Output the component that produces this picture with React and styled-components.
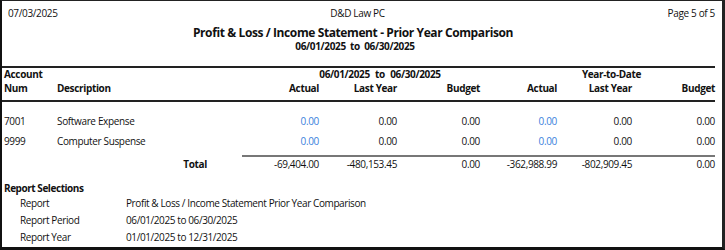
import React from "react";
import styled, { createGlobalStyle } from "styled-components";

const GlobalStyle = createGlobalStyle`
  html, body {
    margin: 0;
    padding: 0;
    background: #fff;
  }
  body {
    font-family: "Open Sans", "Noto Sans", sans-serif;
    color: #111;
  }
`;

const Page = styled.div`
  box-sizing: border-box;
  width: 725px;
  height: 250px;
  border-top: 1px solid #222;
  border-left: 2px solid #111;
  border-right: 3px solid #222;
  border-bottom: 3px solid #111;
  padding: 5px 0 0 0;
  font-size: 10px;
  letter-spacing: -0.35px;
  overflow: hidden;
`;

const TopLine = styled.div`
  display: grid;
  grid-template-columns: 1fr auto 1fr;
  padding: 0 7px 0 6px;
  line-height: 14px;
  height: 14px;
`;

const TopCell = styled.div`
  text-align: ${(p) => p.align || "left"};
  margin-right: ${(p) => (p.align === "center" ? "8px" : "0")};
`;

const Title = styled.div`
  margin-top: 6px;
  text-align: center;
  font-weight: 700;
  font-size: 12px;
  letter-spacing: -0.4px;
  line-height: 13px;
  padding-right: 18px;
`;

const SubTitle = styled.div`
  margin-top: 1px;
  text-align: center;
  font-weight: 700;
  line-height: 12px;
  word-spacing: 2px;
  padding-right: 14px;
`;

const Rule = styled.div`
  margin: ${(p) => p.margin || "0"};
  margin-right: 7px;
  height: ${(p) => p.h || 2}px;
  background: ${(p) => p.color || "#222"};
  margin-left: ${(p) => p.left || 0}px;
`;

const Grid = styled.div`
  display: grid;
  grid-template-columns: 53px 185px 77px 78px 83px 77px 75px 83px;
  padding-left: 2px;
  align-items: center;
`;

const Cell = styled.div`
  text-align: ${(p) => p.align || "left"};
  font-weight: ${(p) => (p.bold ? 700 : 400)};
  color: ${(p) => (p.blue ? "#3b7fdc" : "inherit")};
  grid-column: ${(p) => p.span || "auto"};
  line-height: ${(p) => p.lh || 20}px;
  padding-left: ${(p) => p.pl || 0}px;
  padding-right: ${(p) => p.pr || 0}px;
  white-space: nowrap;
  word-spacing: ${(p) => (p.wide ? "3px" : "normal")};
`;

const Rows = styled.div`
  padding-top: 9px;
`;

const Selections = styled.div`
  margin-top: 10px;
  padding-left: 2px;
`;

const SelTitle = styled.div`
  font-weight: 700;
  line-height: 14px;
  letter-spacing: -0.45px;
`;

const SelRow = styled.div`
  display: grid;
  grid-template-columns: 106px 1fr;
  padding-left: 16px;
  line-height: 17px;
  letter-spacing: -0.4px;
`;

const rows = [
  { num: "7001", desc: "Software Expense" },
  { num: "9999", desc: "Computer Suspense" },
];

const totals = ["-69,404.00", "-480,153.45", "0.00", "-362,988.99", "-802,909.45", "0.00"];

export default function App() {
  return (
    <>
      <GlobalStyle />
      <Page>
        <TopLine>
          <TopCell>07/03/2025</TopCell>
          <TopCell align="center">D&amp;D Law PC</TopCell>
          <TopCell align="right">Page 5 of 5</TopCell>
        </TopLine>
        <Title>Profit &amp; Loss / Income Statement - Prior Year Comparison</Title>
        <SubTitle>06/01/2025 to 06/30/2025</SubTitle>
        <Rule margin="14px 0 0 0" h={2} />

        <Grid>
          <Cell bold lh={13}>Account</Cell>
          <Cell lh={13} />
          <Cell bold lh={13} span="3 / 6" align="center" pl={38} wide>
            06/01/2025 to 06/30/2025
          </Cell>
          <Cell bold lh={13} span="6 / 9" align="center" pl={28}>
            Year-to-Date
          </Cell>
          <Cell bold lh={14}>Num</Cell>
          <Cell bold lh={14}>Description</Cell>
          <Cell bold lh={14} align="right">Actual</Cell>
          <Cell bold lh={14} align="right">Last Year</Cell>
          <Cell bold lh={14} align="right">Budget</Cell>
          <Cell bold lh={14} align="right">Actual</Cell>
          <Cell bold lh={14} align="right">Last Year</Cell>
          <Cell bold lh={14} align="right">Budget</Cell>
        </Grid>
        <Rule margin="5px 0 0 0" h={2} />

        <Rows>
          <Grid>
            {rows.map((r) => (
              <React.Fragment key={r.num}>
                <Cell>{r.num}</Cell>
                <Cell>{r.desc}</Cell>
                <Cell align="right" blue>0.00</Cell>
                <Cell align="right">0.00</Cell>
                <Cell align="right">0.00</Cell>
                <Cell align="right" blue>0.00</Cell>
                <Cell align="right">0.00</Cell>
                <Cell align="right">0.00</Cell>
              </React.Fragment>
            ))}
          </Grid>
        </Rows>
        <Rule margin="4px 0 0 0" h={2} left={240} color="#777" />
        <Grid>
          <Cell lh={14} />
          <Cell lh={14} bold align="right" pr={35}>Total</Cell>
          {totals.map((t, i) => (
            <Cell key={i} lh={14} align="right">{t}</Cell>
          ))}
        </Grid>

        <Selections>
          <SelTitle>Report Selections</SelTitle>
          <SelRow>
            <span>Report</span>
            <span>Profit &amp; Loss / Income Statement Prior Year Comparison</span>
          </SelRow>
          <SelRow>
            <span>Report Period</span>
            <span>06/01/2025 to 06/30/2025</span>
          </SelRow>
          <SelRow>
            <span>Report Year</span>
            <span>01/01/2025 to 12/31/2025</span>
          </SelRow>
        </Selections>
      </Page>
    </>
  );
}
